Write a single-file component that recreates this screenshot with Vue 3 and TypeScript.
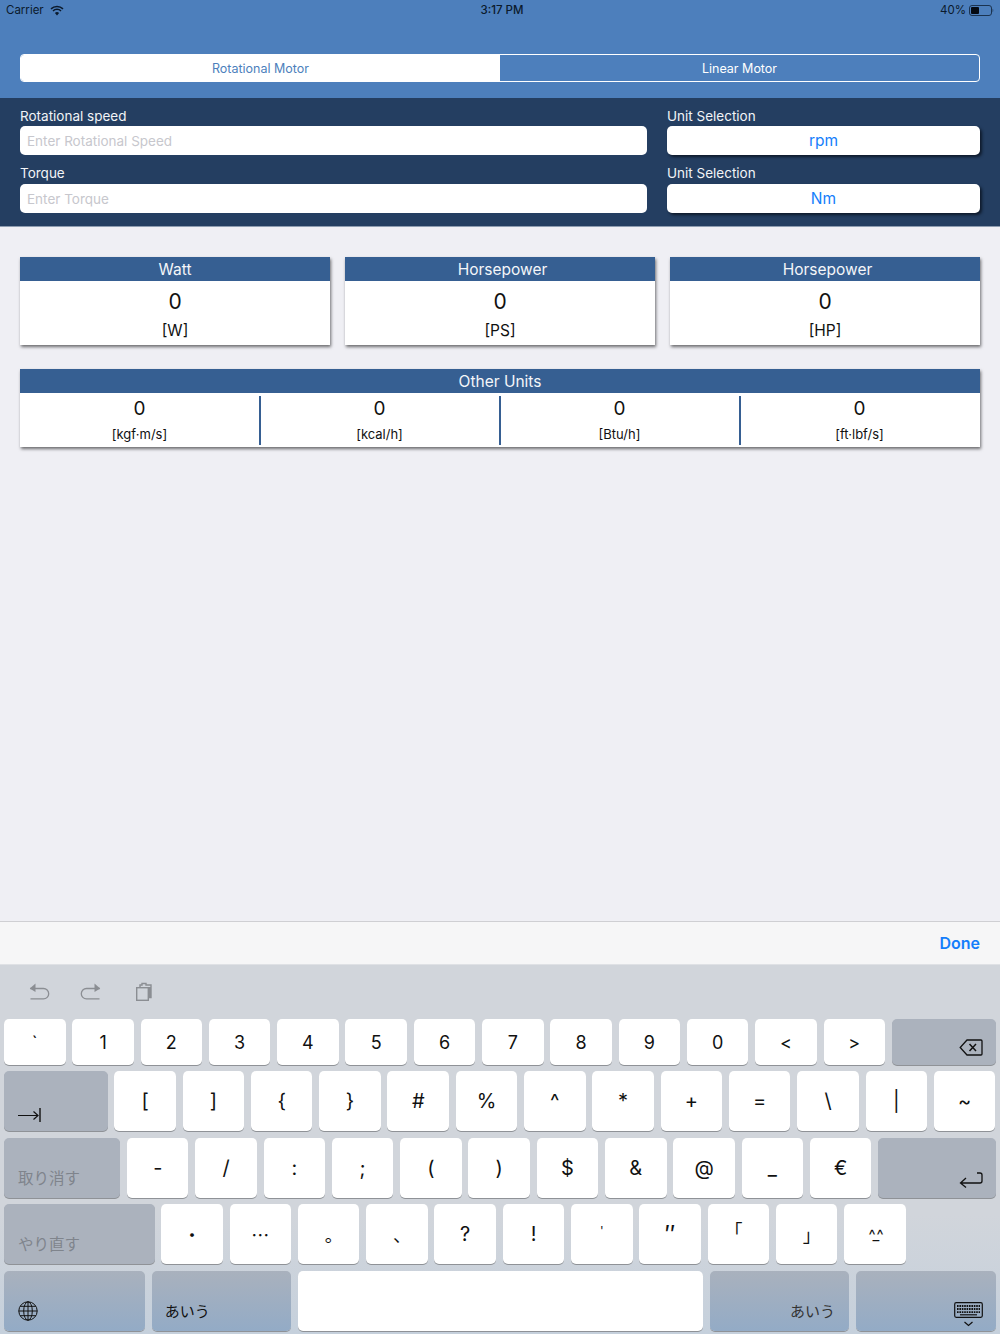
<template>
  <div class="screen">
    <header class="top">
      <div class="status">
        <div class="status-left">
          <span>Carrier</span>
          <svg width="14" height="11" viewBox="0 0 14 11"><path d="M7 10.400 4.900 8a3 3 0 0 1 4.200 0Z" fill="#0b1a2c"/><path d="M1 3.900a8.600 8.600 0 0 1 12 0M3 6a5.700 5.700 0 0 1 8 0" fill="none" stroke="#0b1a2c" stroke-width="1.500"/></svg>
        </div>
        <span class="clock">3:17 PM</span>
        <div class="status-right">
          <span>40%</span>
          <svg width="25" height="11" viewBox="0 0 25 11"><rect x=".5" y=".5" width="22" height="10" rx="2.500" fill="none" stroke="#1b3350" stroke-width="1"/><rect x="2" y="2" width="8" height="7" rx="1" fill="#050a12"/><path d="M23.600 3.800c.9.2.9 3.200 0 3.400Z" fill="#1b3350"/></svg>
        </div>
      </div>
      <div class="segments">
        <button class="segment active">Rotational Motor</button>
        <button class="segment">Linear Motor</button>
      </div>
    </header>

    <section class="form">
      <template v-for="row in formRows" :key="row.label">
        <div class="field">
          <label>{{ row.label }}</label>
          <input type="text" :placeholder="row.placeholder" />
        </div>
        <div class="field">
          <label>Unit Selection</label>
          <button class="unit">{{ row.unit }}</button>
        </div>
      </template>
    </section>

    <main class="content">
      <div class="cards">
        <div v-for="card in cards" :key="card.unit" class="card">
          <h2 class="card-title" :class="{ shifted: card.title === 'Horsepower' }">{{ card.title }}</h2>
          <div class="value">0</div>
          <div class="unit-name">{{ card.unit }}</div>
        </div>
      </div>
      <div class="card other">
        <h2 class="card-title">Other Units</h2>
        <div class="other-grid">
          <div v-for="u in otherUnits" :key="u" class="other-cell">
            <div class="value small">0</div>
            <div class="unit-name small">{{ u }}</div>
          </div>
        </div>
      </div>
    </main>

    <div class="toolbar"><span class="done">Done</span></div>

    <div class="keyboard">
      <div class="shortcuts">
        <svg width="22" height="20" viewBox="0 0 22 20" fill="none" stroke="#8b8e93" stroke-width="1.300"><path d="M2.200 6.500h13.300a4.700 4.700 0 0 1 0 10.400H2.500"/><path d="M7.500 1.600 1.800 6.500l5.700 3.400" fill="#8b8e93" stroke="none"/></svg>
        <svg width="22" height="20" viewBox="0 0 22 20" fill="none" stroke="#8b8e93" stroke-width="1.300"><path d="M19.800 6.500H6.500a4.700 4.700 0 0 0 0 10.400h13"/><path d="m14.500 1.600 5.700 4.900-5.700 3.400" fill="#8b8e93" stroke="none"/></svg>
        <svg class="clip" width="20" height="20" viewBox="0 0 20 20" fill="none" stroke="#8b8e93" stroke-width="1.400"><rect x="1.700" y="5.700" width="11.600" height="12.600"/><path d="M5 5.500V3h2V1.500h4V3h5v12.500h-2.500" /><path d="M14 5h2v10h-2Z" fill="#8b8e93" stroke="none"/></svg>
      </div>

      <div class="key-row first">
        <button v-for="k in row1" :key="k" class="key">{{ k }}</button>
        <button class="key action right bottom grow">
          <svg width="24" height="17" viewBox="0 0 24 17" fill="none" stroke="#111" stroke-width="1.300"><path d="M8 1h14a1 1 0 0 1 1 1v13a1 1 0 0 1-1 1H8L1.200 8.500Z"/><path d="m10.500 5 6.500 7M17 5l-6.500 7" stroke-width="1.500"/></svg>
        </button>
      </div>
      <div class="key-row">
        <button class="key action tab bottom">
          <svg width="24" height="14" viewBox="0 0 24 14" fill="none" stroke="#111" stroke-width="1.200"><path d="M0 7.500h20M15.500 3.500l4.500 4-4.500 4"/><path d="M22 0v14" stroke-width="1.400"/></svg>
        </button>
        <button v-for="k in row2" :key="k" class="key sym">{{ k }}</button>
      </div>
      <div class="key-row">
        <button class="key action undo bottom muted">取り消す</button>
        <button v-for="k in row3" :key="k" class="key sym">{{ k }}</button>
        <button class="key action right bottom grow">
          <svg width="24" height="17" viewBox="0 0 24 17" fill="none" stroke="#111" stroke-width="1.300"><path d="M18 1h3a2 2 0 0 1 2 2v6a2 2 0 0 1-2 2H1.500M7 6l-5.500 5L7 15.500"/></svg>
        </button>
      </div>
      <div class="key-row">
        <button class="key action redo bottom muted">やり直す</button>
        <button v-for="k in row4" :key="k.label" class="key sym" :class="k.cls">{{ k.label }}</button>
      </div>
      <div class="key-row last">
        <button class="key fn globe bottom">
          <svg width="20" height="20" viewBox="0 0 20 20" fill="none" stroke="#111" stroke-width="1"><circle cx="10" cy="10" r="9.200"/><ellipse cx="10" cy="10" rx="4.300" ry="9.200"/><path d="M10 .8v18.400M.8 10h18.400M2.200 5.300h15.600M2.200 14.700h15.600"/></svg>
        </button>
        <button class="key fn kana bottom">あいう</button>
        <button class="key space"></button>
        <button class="key fn kana right bottom dim">あいう</button>
        <button class="key fn hide right">
          <svg width="29" height="25" viewBox="0 0 29 25" fill="none" stroke="#111" stroke-width="1.200"><rect x=".7" y=".7" width="27.600" height="14.600" rx="1.500"/><path d="M3 4h23M3 7h23" stroke-width="1.800" stroke-dasharray="1.600 .8"/><path d="M3 10.200h23" stroke-width="1.800" stroke-dasharray="1.600 .8"/><path d="M6 12.800h17" stroke-width="1.200"/><path d="m10.500 20 4 3.500 4-3.500"/></svg>
        </button>
      </div>
    </div>
  </div>
</template>

<script setup lang="ts">
const formRows = [
  { label: 'Rotational speed', placeholder: 'Enter Rotational Speed', unit: 'rpm' },
  { label: 'Torque', placeholder: 'Enter Torque', unit: 'Nm' },
];

const cards = [
  { title: 'Watt', unit: '[W]' },
  { title: 'Horsepower', unit: '[PS]' },
  { title: 'Horsepower', unit: '[HP]' },
];

const otherUnits = ['[kgf·m/s]', '[kcal/h]', '[Btu/h]', '[ft·lbf/s]'];

const row1 = ['`', '1', '2', '3', '4', '5', '6', '7', '8', '9', '0', '<', '>'];
const row2 = ['[', ']', '{', '}', '#', '%', '^', '*', '+', '=', '\\', '|', '~'];
const row3 = ['-', '/', ':', ';', '(', ')', '$', '&', '@', '_', '€'];
const row4 = [
  { label: '・', cls: 'cjk' },
  { label: '…', cls: 'cjk' },
  { label: '。', cls: 'cjk nudge-right' },
  { label: '、', cls: 'cjk nudge-right' },
  { label: '?', cls: '' },
  { label: '!', cls: '' },
  { label: '\'', cls: 'tick' },
  { label: '″', cls: 'dquote' },
  { label: '「', cls: 'cjk nudge-open' },
  { label: '」', cls: 'cjk nudge-right' },
  { label: '^_^', cls: 'face' },
];
</script>

<style>
body {
  margin: 0;
  background: #efeff4;
}
</style>

<style scoped>
.screen {
  width: 1000px;
  height: 1334px;
  display: flex;
  flex-direction: column;
  overflow: hidden;
  font-family: Inter, "Noto Sans CJK JP", sans-serif;
  background: #efeff4;
}

button {
  font-family: inherit;
  padding: 0;
  border: none;
}

.top {
  height: 98px;
  box-sizing: border-box;
  background: #4d7fbc;
  padding: 0 20px;
}

.status {
  height: 20px;
  margin: 0 -14px;
  display: flex;
  align-items: center;
  justify-content: space-between;
  font-size: 11.500px;
  color: #0b1a2c;
}

.status-left,
.status-right {
  width: 120px;
  display: flex;
  align-items: center;
  gap: 6px;
}

.status-right {
  justify-content: flex-end;
  gap: 3px;
}

.clock {
  font-weight: 500;
  margin-left: 4px;
}

.segments {
  margin-top: 34px;
  height: 28px;
  display: flex;
  box-sizing: border-box;
  border: 1px solid #fff;
  border-radius: 4px;
  overflow: hidden;
}

.segment {
  flex: 1;
  background: transparent;
  color: #fff;
  font-size: 12.500px;
}

.segment.active {
  background: #fff;
  color: #4d7fbc;
}

.form {
  height: 129px;
  box-sizing: border-box;
  background: #243e61;
  border-bottom: 1px solid #8d9cb0;
  padding: 10px 20px 0;
  display: grid;
  grid-template-columns: 627px 313px;
  grid-template-rows: 47px 48px;
  column-gap: 20px;
  row-gap: 10px;
  align-content: start;
}

.field {
  display: flex;
  flex-direction: column;
}

.field label {
  flex: 1;
  line-height: 17px;
  font-size: 13.500px;
  color: #f2f4f7;
}

.field input {
  height: 29px;
  box-sizing: border-box;
  border: none;
  border-radius: 5px;
  padding: 0 7px;
  font-family: inherit;
  font-size: 13.500px;
  background: #fff;
}

.field input::placeholder {
  color: #c7c7cd;
}

.unit {
  height: 29px;
  border-radius: 5px;
  background: #fff;
  color: #147efb;
  font-size: 15.500px;
  box-shadow: 2px 2px 3px #0e1a2b;
}

.content {
  flex: 1;
  padding: 30px 20px 0;
}

.cards {
  display: flex;
  gap: 15px;
  margin-bottom: 24px;
}

.card {
  flex: 1;
  background: #fff;
  box-shadow: 1px 2px 3px rgba(0, 0, 0, 0.55);
}

.card-title {
  margin: 0;
  height: 24px;
  line-height: 25px;
  background: #365f92;
  color: #f4f6f9;
  font-size: 15.500px;
  font-weight: 400;
  text-align: center;
}

.card-title.shifted {
  padding-left: 5px;
}

.value {
  margin-top: 7px;
  height: 27px;
  line-height: 27px;
  font-size: 21px;
  color: #111;
  text-align: center;
}

.unit-name {
  height: 30px;
  line-height: 32px;
  font-size: 15.500px;
  color: #111;
  text-align: center;
}

.other-grid {
  display: grid;
  grid-template-columns: repeat(4, 1fr);
  padding: 3px 0 2px;
}

.other-cell {
  height: 49px;
  box-sizing: content-box;
  border-right: 2px solid #365f92;
  margin-right: -1px;
}

.other-cell:last-child {
  border-right: none;
  margin-right: 1px;
}

.value.small {
  margin-top: 1px;
  height: 24px;
  line-height: 24px;
  font-size: 19px;
}

.unit-name.small {
  height: 24px;
  line-height: 27px;
  font-size: 13px;
}

.toolbar {
  height: 44px;
  box-sizing: border-box;
  flex-shrink: 0;
  background: #f6f6f7;
  border-top: 1px solid #cfcfd3;
  border-bottom: 1px solid #dfe1e5;
  padding-right: 20px;
  display: flex;
  align-items: center;
  justify-content: flex-end;
}

.done {
  color: #147efb;
  font-size: 16px;
  font-weight: 600;
}

.keyboard {
  height: 369px;
  box-sizing: border-box;
  flex-shrink: 0;
  padding: 0 4px;
  background: linear-gradient(#d1d5db 0, #d1d5db 250px, #c5d0dc 100%);
  display: flex;
  flex-direction: column;
}

.shortcuts {
  height: 54px;
  display: flex;
  align-items: center;
  gap: 30px;
  padding-left: 24px;
  box-sizing: border-box;
}

.clip {
  margin-left: 3px;
}

.key-row {
  display: flex;
  gap: 6.800px;
  height: 60px;
  margin-bottom: 6.500px;
}

.key-row.first {
  height: 45.500px;
}

.key-row.first .key:not(.action) {
  padding-top: 2px;
}

.key-row.last {
  margin-bottom: 0;
}

.key {
  width: 61.500px;
  flex-shrink: 0;
  box-sizing: border-box;
  background: #fff;
  border-radius: 5px;
  box-shadow: 0 1px 0 #8f9297;
  color: #111;
  font-size: 18px;
  display: flex;
  align-items: center;
  justify-content: center;
}

.sym {
  font-size: 20px;
}

.cjk {
  font-family: "Noto Sans CJK JP", sans-serif;
  font-size: 18px;
}

.nudge-right {
  padding-left: 10px;
}

.nudge-open {
  padding: 0 10px 8px 0;
}

.tick {
  font-size: 12px;
  padding-bottom: 8px;
}

.dquote {
  font-size: 24px;
}

.face {
  font-size: 15px;
  letter-spacing: -2px;
}

.action {
  background: #abb2bd;
}

.grow {
  flex: 1;
}

.bottom {
  align-items: flex-end;
  justify-content: flex-start;
  padding: 0 13px 9px;
}

.right {
  justify-content: flex-end;
}

.tab {
  width: 103.500px;
  padding-left: 14px;
}

.undo {
  width: 116.200px;
  padding-left: 14px;
}

.redo {
  width: 150.500px;
  padding-left: 14px;
}

.muted {
  color: #7f848c;
  font-size: 15.500px;
  padding-bottom: 10px;
}

.fn {
  background: linear-gradient(#a9b1bd, #93abc6);
  font-size: 15px;
}

.globe {
  width: 141px;
  padding-left: 14px;
  padding-bottom: 10px;
}

.kana {
  width: 139px;
  padding-left: 13px;
  padding-right: 14px;
  padding-bottom: 10px;
}

.dim {
  color: #333;
}

.space {
  width: 405.500px;
}

.hide {
  flex: 1;
  align-items: flex-end;
  padding: 0 13px 4px;
}
</style>
